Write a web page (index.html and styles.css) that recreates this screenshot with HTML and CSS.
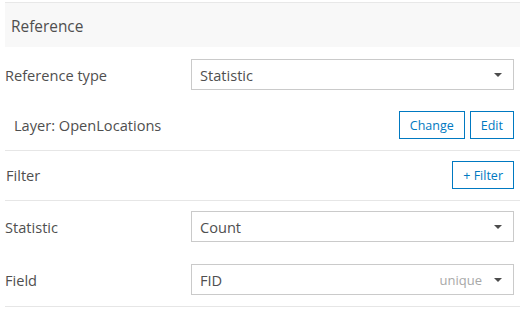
FILE: index.html
```html
<!DOCTYPE html>
<html lang="en">

<head>
  <meta charset="UTF-8">
  <meta name="viewport" content="width=device-width, initial-scale=1.0">
  <title>Reference</title>
  <link rel="stylesheet" href="styles.css">
</head>

<body>
  <section class="panel">
    <header class="panel-title">Reference</header>

    <div class="field-row first">
      <label class="field-label">Reference type</label>
      <div class="select">
        <span class="select-value">Statistic</span>
        <svg class="caret" width="8" height="4" viewBox="0 0 8 4"><path d="M0 0h8L4 4z" fill="#4c4c4c"/></svg>
      </div>
    </div>

    <div class="action-row layer">
      <span class="layer-name">Layer: OpenLocations</span>
      <div class="buttons">
        <button class="btn">Change</button>
        <button class="btn">Edit</button>
      </div>
    </div>

    <div class="action-row">
      <span class="field-label">Filter</span>
      <div class="buttons">
        <button class="btn">+ Filter</button>
      </div>
    </div>

    <div class="field-row stat">
      <label class="field-label">Statistic</label>
      <div class="select">
        <span class="select-value">Count</span>
        <svg class="caret" width="8" height="4" viewBox="0 0 8 4"><path d="M0 0h8L4 4z" fill="#4c4c4c"/></svg>
      </div>
    </div>

    <div class="field-row last">
      <label class="field-label">Field</label>
      <div class="select">
        <span class="select-value">FID</span>
        <span class="select-hint">unique</span>
        <svg class="caret" width="8" height="4" viewBox="0 0 8 4"><path d="M0 0h8L4 4z" fill="#4c4c4c"/></svg>
      </div>
    </div>
  </section>
</body>

</html>
```

FILE: styles.css
```css
* {
  margin: 0;
  box-sizing: border-box;
}

body {
  font-family: "Open Sans", "Noto Sans", sans-serif;
  font-size: 14.6px;
  line-height: 20px;
  color: #4f4f4f;
  background: #fff;
  padding: 2px 0 0 5px;
}

.panel {
  display: flex;
  flex-direction: column;
}

.panel-title {
  height: 45px;
  display: flex;
  align-items: center;
  padding-block-start: 3px;
  padding-inline-start: 6px;
  font-size: 15.4px;
  background: #f8f8f8;
  border-block-start: 1px solid #e8e8e8;
}

.field-row {
  display: grid;
  grid-template-columns: 186px 1fr;
  align-items: center;
  padding-inline-end: 6px;
}

.field-row.first {
  padding-block-start: 12px;
}

.field-row.stat {
  padding-block-start: 10px;
}

.field-row.last {
  padding-block: 22px 11px;
  border-block-end: 1px solid #e6e6e6;
}

.select {
  display: flex;
  align-items: center;
  gap: 12px;
  height: 31px;
  padding-inline: 8px 11px;
  border: 1px solid #cacaca;
  background: #fff;
}

.select-value {
  flex: 1;
}

.select-hint {
  color: #a8a8a8;
  font-size: 13px;
}

.action-row {
  display: flex;
  align-items: center;
  justify-content: space-between;
  padding: 10px 6px 11px 1px;
  border-block-end: 1px solid #e6e6e6;
}

.action-row.layer {
  padding-block-start: 21px;
  padding-inline-start: 9px;
}

.buttons {
  display: flex;
  gap: 5px;
}

.btn {
  font-family: inherit;
  font-size: 12.5px;
  color: #0079c1;
  background: #fff;
  border: 1px solid #0079c1;
  height: 28px;
  padding-inline: 10px;
  cursor: pointer;
}
```
